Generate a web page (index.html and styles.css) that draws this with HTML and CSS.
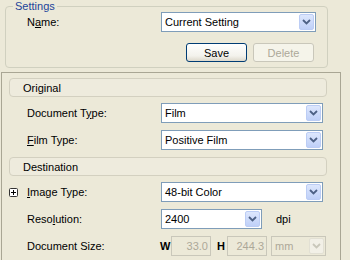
FILE: index.html
```html
<!DOCTYPE html>
<html lang="en">
<head>
  <meta charset="UTF-8" />
  <title>Scan Settings</title>
  <link rel="stylesheet" href="styles.css">
</head>
<body>

  <!-- Settings group -->
  <fieldset class="settings">
    <legend>Settings</legend>
    <div class="row">
      <span class="label">N<u>a</u>me:</span>
      <div class="combo combo-name">
        <span class="combo-text">Current Setting</span>
        <span class="combo-btn"><svg width="9" height="6" viewBox="0 0 9 6"><path d="M1 1 L4.5 4.5 L8 1" fill="none" stroke="#4D6185" stroke-width="1.8"/></svg></span>
      </div>
    </div>
    <div class="btn-row">
      <button class="btn">Save</button>
      <button class="btn" disabled>Delete</button>
    </div>
  </fieldset>

  <!-- Main panel -->
  <div class="panel">
    <div class="bar">Original</div>

    <div class="prow first">
      <span class="lead"></span>
      <span class="label">Document T<u>y</u>pe:</span>
      <div class="combo combo-wide">
        <span class="combo-text">Film</span>
        <span class="combo-btn"><svg width="9" height="6" viewBox="0 0 9 6"><path d="M1 1 L4.5 4.5 L8 1" fill="none" stroke="#4D6185" stroke-width="1.8"/></svg></span>
      </div>
    </div>
    <div class="prow">
      <span class="lead"></span>
      <span class="label"><u>F</u>ilm Type:</span>
      <div class="combo combo-wide">
        <span class="combo-text">Positive Film</span>
        <span class="combo-btn"><svg width="9" height="6" viewBox="0 0 9 6"><path d="M1 1 L4.5 4.5 L8 1" fill="none" stroke="#4D6185" stroke-width="1.8"/></svg></span>
      </div>
    </div>

    <div class="bar bar-gap">Destination</div>

    <div class="prow first">
      <span class="lead">
        <svg class="plus" width="9" height="9" viewBox="0 0 9 9"><rect x="0.5" y="0.5" width="8" height="8" rx="1" fill="#fff" stroke="#333"/><path d="M2 4.5 H7 M4.5 2 V7" stroke="#000" stroke-width="1"/></svg>
      </span>
      <span class="label"><u>I</u>mage Type:</span>
      <div class="combo combo-wide">
        <span class="combo-text">48-bit Color</span>
        <span class="combo-btn"><svg width="9" height="6" viewBox="0 0 9 6"><path d="M1 1 L4.5 4.5 L8 1" fill="none" stroke="#4D6185" stroke-width="1.8"/></svg></span>
      </div>
    </div>
    <div class="prow">
      <span class="lead"></span>
      <span class="label">Reso<u>l</u>ution:</span>
      <div class="combo combo-res">
        <span class="combo-text">2400</span>
        <span class="combo-btn"><svg width="9" height="6" viewBox="0 0 9 6"><path d="M1 1 L4.5 4.5 L8 1" fill="none" stroke="#4D6185" stroke-width="1.8"/></svg></span>
      </div>
      <span class="unit">dpi</span>
    </div>
    <div class="prow">
      <span class="lead"></span>
      <span class="label">Document Size:</span>
      <div class="size">
        <span class="dim">W</span>
        <span class="field">33.0</span>
        <span class="dim dim-h">H</span>
        <span class="field">244.3</span>
        <div class="combo combo-off">
          <span class="combo-text">mm</span>
          <span class="combo-btn"><svg width="9" height="6" viewBox="0 0 9 6"><path d="M1 1 L4.5 4.5 L8 1" fill="none" stroke="#C9C7BA" stroke-width="1.8"/></svg></span>
        </div>
      </div>
    </div>
  </div>

</body>
</html>
```

FILE: styles.css
```css
body {
  margin: 0;
  padding-top: 1px;
  width: 350px;
  height: 260px;
  overflow: hidden;
  background: #ECE9D8;
  font-family: 'Liberation Sans', Arial, sans-serif;
  font-size: 11px;
  color: #000;
}

u {
  text-decoration-thickness: 1px;
  text-underline-offset: 1px;
}

/* Settings group box */
.settings {
  margin: 0 0 0 5px;
  width: 323px;
  box-sizing: border-box;
  border: 1px solid #D0D0BF;
  border-radius: 4px;
  padding: 0 11px 5px 21px;
  min-width: 0;
}

.settings legend {
  margin-left: -14px;
  padding: 0 2px;
  line-height: 11px;
  color: #22449A;
}

.row {
  display: flex;
  align-items: center;
  height: 20px;
}

.label {
  width: 134px;
  flex: none;
}

.btn-row {
  display: flex;
  justify-content: flex-end;
  gap: 6px;
  margin-top: 11px;
  margin-right: 2px;
}

.btn {
  width: 61px;
  height: 19px;
  padding: 0;
  border: 1px solid #003C74;
  border-radius: 3px;
  background: linear-gradient(#FFFFFF, #F3F2EC 70%, #DCD8CB);
  font-family: inherit;
  font-size: 11px;
  color: #000;
}

.btn:disabled {
  border-color: #C9C7BA;
  background: #F5F4EA;
  color: #ACA899;
}

/* combo boxes */
.combo {
  display: flex;
  align-items: center;
  height: 20px;
  box-sizing: border-box;
  border: 1px solid #7F9DB9;
  background: #fff;
  flex: none;
}

.combo-text {
  flex: 1;
  padding-left: 3px;
  white-space: nowrap;
}

.combo-btn {
  width: 15px;
  height: 16px;
  margin-right: 1px;
  box-sizing: border-box;
  border: 1px solid #BCCDF5;
  border-radius: 2px;
  background: linear-gradient(#DDE7FD, #BFD0F8);
  display: flex;
  align-items: center;
  justify-content: center;
}

.combo-name { width: 155px; }
.combo-wide { width: 162px; }
.combo-res { width: 101px; }

.combo-off {
  width: 55px;
  border-color: #C9C7BA;
  background: #ECE9D8;
  color: #ACA899;
}

.combo-off .combo-btn {
  border-color: #E2E0D4;
  background: #F2F0E7;
}

/* main panel */
.panel {
  margin: 4px 0 0 1px;
  width: 340px;
  height: 190px;
  box-sizing: border-box;
  border: 1px solid #A9A694;
  padding-top: 5px;
}

.bar {
  margin-left: 7px;
  width: 318px;
  height: 19px;
  box-sizing: border-box;
  border: 1px solid #D3D0C0;
  border-radius: 4px;
  background: #EEEBDD;
  padding-left: 13px;
  display: flex;
  align-items: center;
}

.bar-gap {
  margin-top: 7px;
}

.prow {
  display: flex;
  align-items: center;
  height: 20px;
  padding-left: 7px;
  margin-top: 7px;
}

.prow.first {
  margin-top: 6px;
}

.lead {
  width: 18px;
  flex: none;
  display: flex;
  align-items: center;
}

.plus {
  display: block;
  margin-top: 1px;
}

.unit {
  margin-left: 14px;
}

.size {
  display: flex;
  align-items: center;
  margin-left: -1px;
}

.dim {
  width: 11px;
  font-weight: bold;
}

.dim-h {
  margin-left: 6px;
  width: 10px;
}

.field {
  width: 40px;
  height: 20px;
  box-sizing: border-box;
  border: 1px solid #C9C7BA;
  padding-right: 2px;
  text-align: right;
  line-height: 18px;
  color: #ACA899;
}

.size .combo-off {
  margin-left: 4px;
}
```
